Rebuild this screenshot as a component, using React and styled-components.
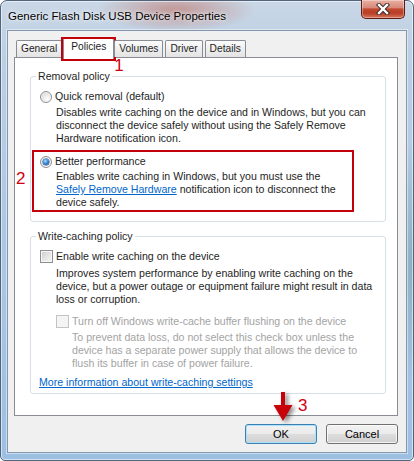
import React from "react";
import styled, { createGlobalStyle } from "styled-components";

const GlobalStyle = createGlobalStyle`
  html, body {
    margin: 0;
    padding: 0;
    background: #ffffff;
  }
  body {
    font-family: "Liberation Sans", Arial, sans-serif;
    color: #1e1e1e;
  }
`;

const App = () => {
  return (
    <>
      <GlobalStyle />
      <Window>
        <TitleBar>
          <Title>Generic Flash Disk USB Device Properties</Title>
          <CloseButton aria-label="Close">
            <svg width="14" height="12" viewBox="0 0 14 12">
              <path d="M3 2 L11 10 M11 2 L3 10" stroke="#3b2b2b" strokeWidth="4.4" strokeLinecap="square" />
              <path d="M3 2 L11 10 M11 2 L3 10" stroke="#ffffff" strokeWidth="2.4" strokeLinecap="square" />
            </svg>
          </CloseButton>
        </TitleBar>

        <Client>
          <TabRow>
            <Tab>General</Tab>
            <Tab $active>
              Policies
              <Mark $left="50px" $top="18px">1</Mark>
            </Tab>
            <Tab>Volumes</Tab>
            <Tab>Driver</Tab>
            <Tab>Details</Tab>
          </TabRow>

          <Panel>
            <Group>
              <Legend>Removal policy</Legend>
              <OptionRow>
                <Radio />
                <span>Quick removal (default)</span>
              </OptionRow>
              <Desc>
                Disables write caching on the device and in Windows, but you can<br />
                disconnect the device safely without using the Safely Remove<br />
                Hardware notification icon.
              </Desc>

              <Highlight>
                <Mark $left="-18px" $top="18px">2</Mark>
                <OptionRow>
                  <Radio $checked />
                  <span>Better performance</span>
                </OptionRow>
                <Desc $gap="2px">
                  Enables write caching in Windows, but you must use the<br />
                  <Link>Safely Remove Hardware</Link> notification icon to disconnect the<br />
                  device safely.
                </Desc>
              </Highlight>
            </Group>

            <Group $second>
              <Legend>Write-caching policy</Legend>
              <OptionRow>
                <Check />
                <span>Enable write caching on the device</span>
              </OptionRow>
              <Desc $gap="4px">
                Improves system performance by enabling write caching on the<br />
                device, but a power outage or equipment failure might result in data<br />
                loss or corruption.
              </Desc>

              <OptionRow $indent $disabled>
                <Check $disabled />
                <span>Turn off Windows write-cache buffer flushing on the device</span>
              </OptionRow>
              <Desc $indent $disabled>
                To prevent data loss, do not select this check box unless the<br />
                device has a separate power supply that allows the device to<br />
                flush its buffer in case of power failure.
              </Desc>

              <MoreLink>More information about write-caching settings</MoreLink>
            </Group>
          </Panel>

          <ButtonRow>
            <Button $default>
              OK
              <Arrow width="32" height="36" viewBox="0 0 32 36">
                <path d="M13 0 H17 V13 H24.5 L15 29 L5.5 13 H13 Z" fill="#c8000a" />
              </Arrow>
              <Mark $left="52px" $top="-28px">3</Mark>
            </Button>
            <Button>Cancel</Button>
          </ButtonRow>
        </Client>
      </Window>
    </>
  );
};

const Window = styled.div`
  position: relative;
  width: 414px;
  height: 461px;
  box-sizing: border-box;
  border: 1px solid #50647c;
  border-radius: 7px 7px 5px 5px;
  display: flex;
  flex-direction: column;
  background:
    radial-gradient(ellipse 80px 22px at 175px 9px, rgba(190, 108, 96, 0.6), rgba(190, 108, 96, 0) 100%),
    radial-gradient(ellipse 12px 120px at 411px 260px, rgba(70, 130, 120, 0.35), rgba(70, 130, 120, 0) 100%),
    linear-gradient(180deg, #c9d7e6 0%, #bccfe3 12%, #a9c6e3 60%, #9dbfe2 100%);
  box-shadow: inset 0 0 0 1px rgba(255, 255, 255, 0.55);
`;

const TitleBar = styled.div`
  height: 29px;
  flex-shrink: 0;
  display: flex;
  align-items: center;
  padding-left: 7px;
`;

const Title = styled.span`
  font-size: 11.5px;
  color: #000000;
  text-shadow: 0 0 6px rgba(255, 255, 255, 0.9), 0 0 3px rgba(255, 255, 255, 0.8);
  white-space: nowrap;
`;

const CloseButton = styled.div`
  align-self: flex-start;
  margin: -1px 8px 0 auto;
  width: 44px;
  height: 19px;
  box-sizing: border-box;
  border: 1px solid #5e1d14;
  border-top: none;
  border-radius: 0 0 5px 5px;
  display: flex;
  align-items: center;
  justify-content: center;
  background: linear-gradient(180deg, #eab0a3 0%, #d88a7b 42%, #c24a33 50%, #b93c24 72%, #d6735a 100%);
  box-shadow: inset 0 0 0 1px rgba(255, 255, 255, 0.35);
`;

const Client = styled.div`
  flex: 1;
  min-height: 0;
  margin: 0 6px 7px;
  border: 1px solid #8397ae;
  box-shadow: 0 0 0 1px rgba(255, 255, 255, 0.45);
  background: #f0f0f0;
  display: flex;
  flex-direction: column;
  padding: 7px 8px 8px 6px;
`;

const TabRow = styled.div`
  height: 19px;
  flex-shrink: 0;
  display: flex;
  align-items: flex-end;
  padding-left: 2px;
  position: relative;
  z-index: 1;
`;

const Tab = styled.div`
  position: relative;
  box-sizing: border-box;
  height: ${(p) => (p.$active ? "21px" : "17px")};
  margin: ${(p) => (p.$active ? "0 0 -2px -1px" : "0 2px 0 0")};
  padding: ${(p) => (p.$active ? "0 7px" : "0 4px")};
  border: 1px solid #898c95;
  border-bottom: none;
  border-radius: 2px 2px 0 0;
  font-size: 10.2px;
  line-height: 16px;
  color: #1e1e1e;
  white-space: nowrap;
  background: ${(p) =>
    p.$active ? "#ffffff" : "linear-gradient(180deg, #fbfbfb 0%, #f0f0f0 45%, #e3e3e3 100%)"};

  ${(p) =>
    p.$active &&
    `
    &::after {
      content: "";
      position: absolute;
      left: -3px;
      right: -3px;
      top: -2px;
      bottom: -2px;
      border: 2px solid #c4000a;
    }
  `}
`;

const Mark = styled.span`
  position: absolute;
  left: ${(p) => p.$left};
  top: ${(p) => p.$top};
  font-size: 17px;
  line-height: 17px;
  color: #d00010;
  font-weight: normal;
`;

const Panel = styled.div`
  height: 359px;
  flex-shrink: 0;
  box-sizing: border-box;
  border: 1px solid #898c95;
  background: #ffffff;
  padding: 12px 11px 0 15px;
  display: flex;
  flex-direction: column;
`;

const Group = styled.fieldset`
  margin: ${(p) => (p.$second ? "8px 0 0" : "0")};
  padding: ${(p) => (p.$second ? "7px 8px 4px 9px" : "7px 8px 9px 9px")};
  border: 1px solid #d5dfe5;
  border-radius: 3px;
  min-width: 0;
  font-size: 10.6px;
  line-height: 13px;
`;

const Legend = styled.legend`
  padding: 0 2px;
  margin-left: -4px;
  font-size: 10.6px;
  line-height: 13px;
`;

const OptionRow = styled.div`
  display: flex;
  align-items: center;
  gap: 3px;
  height: 13px;
  white-space: nowrap;
  margin: ${(p) => (p.$indent ? "9px 0 0 16px" : "0")};
  color: ${(p) => (p.$disabled ? "#a3a3a3" : "#1e1e1e")};
`;

const Radio = styled.span`
  position: relative;
  width: 12px;
  height: 12px;
  box-sizing: border-box;
  border-radius: 50%;
  border: 1px solid #8f9092;
  background: radial-gradient(circle at 65% 70%, #ffffff 0%, #eeeeee 35%, #cfcfcf 100%);
  box-shadow: inset 0 0 0 1px rgba(255, 255, 255, 0.6);
  flex-shrink: 0;

  ${(p) =>
    p.$checked &&
    `
    &::after {
      content: "";
      position: absolute;
      left: 2px;
      top: 2px;
      width: 6px;
      height: 6px;
      border-radius: 50%;
      background: radial-gradient(circle at 40% 35%, #bfe6ff 0%, #3d91de 40%, #0d3f86 100%);
      box-shadow: 0 0 0 0.5px #1a4a8a;
    }
  `}
`;

const Check = styled.span`
  width: 13px;
  height: 13px;
  box-sizing: border-box;
  border: 1px solid ${(p) => (p.$disabled ? "#c3c3c3" : "#8f8f8f")};
  background: ${(p) =>
    p.$disabled ? "#f4f4f4" : "linear-gradient(135deg, #cbcbcb 0%, #e6e6e6 55%, #f6f6f6 100%)"};
  box-shadow: inset 0 0 0 1px #f6f6f6;
  flex-shrink: 0;
`;

const Desc = styled.div`
  margin-top: ${(p) => p.$gap || "3px"};
  padding-left: ${(p) => (p.$indent ? "32px" : "16px")};
  line-height: 13px;
  white-space: nowrap;
  color: ${(p) => (p.$disabled ? "#a3a3a3" : "#1e1e1e")};
`;

const Highlight = styled.div`
  position: relative;
  width: 322px;
  box-sizing: border-box;
  margin: 5px 0 0 -8px;
  border: 2px solid #c4000a;
  padding: 3px 0 1px 6px;
`;

const Link = styled.span`
  color: #0066cc;
  text-decoration: underline;
`;

const MoreLink = styled(Link)`
  display: block;
  margin: 6px 0 0 -1px;
  line-height: 13px;
  white-space: nowrap;
`;

const ButtonRow = styled.div`
  display: flex;
  justify-content: flex-end;
  gap: 9px;
  margin-top: 8px;
  flex-shrink: 0;
`;

const Button = styled.div`
  position: relative;
  width: 72px;
  height: 20px;
  box-sizing: border-box;
  border: 1px solid ${(p) => (p.$default ? "#3c7fb1" : "#707070")};
  border-radius: 3px;
  display: flex;
  align-items: center;
  justify-content: center;
  font-size: 11px;
  color: #000000;
  background: linear-gradient(180deg, #f2f2f2 0%, #ebebeb 48%, #dddddd 52%, #cfcfcf 100%);
  box-shadow: inset 0 0 0 1px ${(p) => (p.$default ? "#a9e2fa" : "rgba(255, 255, 255, 0.75)")};
`;

const Arrow = styled.svg`
  position: absolute;
  left: 22px;
  top: -33px;
  filter: drop-shadow(3px 2px 2px rgba(0, 0, 0, 0.45));
`;

export default App;
